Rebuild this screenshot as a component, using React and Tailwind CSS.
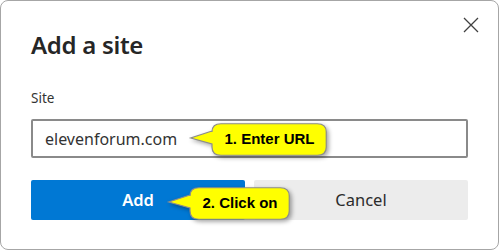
import React from "react";

const font = { fontFamily: '"Segoe UI", "Noto Sans", "Open Sans", sans-serif' };

function Callout({ className, width, text }) {
  // pointer on the left, rounded yellow box to the right
  const h = 33;
  const bx = 22;
  const r = 9;
  const d = `M${bx + r},0.75 H${width - r - 0.75} Q${width - 0.75},0.75 ${width - 0.75},${r} V${h - r} Q${width - 0.75},${h - 0.75} ${width - r - 0.75},${h - 0.75} H${bx + r} Q${bx},${h - 0.75} ${bx},${h - r} V21 L0.75,15 L${bx},8 V${r} Q${bx},0.75 ${bx + r},0.75 Z`;
  return (
    <div className={`absolute ${className}`} style={{ width, height: h }}>
      <svg
        width={width}
        height={h}
        viewBox={`0 0 ${width} ${h}`}
        className="absolute inset-0 overflow-visible drop-shadow-[2px_2px_2px_rgba(0,0,0,0.35)]"
      >
        <path d={d} fill="#ffff00" stroke="#8c8c8c" strokeWidth="1.2" />
      </svg>
      <div
        className="absolute inset-y-0 right-0 flex items-center justify-center text-[15px] font-bold text-black"
        style={{ left: bx, fontFamily: '"Liberation Sans", Arial, sans-serif' }}
      >
        {text}
      </div>
    </div>
  );
}

export default function App() {
  return (
    <div className="w-[500px] h-[250px] bg-white" style={font}>
      <div className="relative w-[499px] h-[250px] border border-[#a6a6a6] rounded-[8px] bg-white px-[30px]">
        {/* close */}
        <button className="absolute right-[19px] top-[15px] w-[17px] h-[17px] flex items-center justify-center">
          <svg width="16" height="16" viewBox="0 0 16 16">
            <path d="M1 1 L15 15 M15 1 L1 15" stroke="#404040" strokeWidth="1.3" />
          </svg>
        </button>

        <h1 className="pt-[27px] text-[24px] leading-[33px] font-semibold text-[#262626] tracking-[-0.3px]">
          Add a site
        </h1>

        <div className="mt-[28px] text-[13.5px] leading-[18px] text-[#333]">Site</div>

        <div className="mt-[12px] h-[39px] w-[437px] border-2 border-[#8a8a8a] rounded-[2px] flex items-center px-[12px] text-[16px] text-[#333]">
          elevenforum.com
        </div>

        <div className="mt-[22px] flex gap-[9px] w-[437px]">
          <button className="h-[40px] w-[214px] rounded-[2px] bg-[#0078d4] text-white text-[16.5px] font-semibold">
            Add
          </button>
          <button className="h-[40px] w-[214px] rounded-[2px] bg-[#ececec] text-[#2b2b2b] text-[16.5px]">
            Cancel
          </button>
        </div>

        <Callout className="left-[189px] top-[122px]" width={137} text="1. Enter URL" />
        <Callout className="left-[167px] top-[186px]" width={122} text="2. Click on" />
      </div>
    </div>
  );
}
